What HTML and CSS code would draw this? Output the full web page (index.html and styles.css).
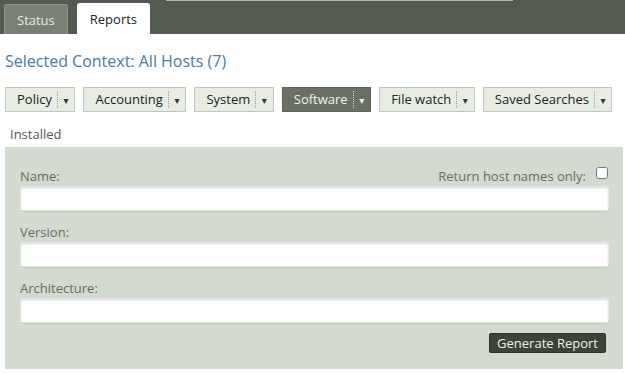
FILE: index.html
```html
<!DOCTYPE html>
<html lang="en">
<head>
    <meta charset="UTF-8">
    <meta name="viewport" content="width=device-width, initial-scale=1.0">
    <title>Reports</title>
    <link rel="stylesheet" href="styles.css">
</head>
<body>

<div class="topbar">
    <div class="topline"></div>
    <div class="tabs">
        <a class="tab">Status</a>
        <a class="tab active">Reports</a>
    </div>
</div>

<div class="content">
    <h2 class="context">Selected Context: All Hosts (7)</h2>

    <div class="menus">
        <div class="menu"><span class="menu-label">Policy</span><span class="menu-arrow">&#9662;</span></div>
        <div class="menu"><span class="menu-label">Accounting</span><span class="menu-arrow">&#9662;</span></div>
        <div class="menu"><span class="menu-label">System</span><span class="menu-arrow">&#9662;</span></div>
        <div class="menu selected"><span class="menu-label">Software</span><span class="menu-arrow">&#9662;</span></div>
        <div class="menu"><span class="menu-label">File watch</span><span class="menu-arrow">&#9662;</span></div>
        <div class="menu"><span class="menu-label">Saved Searches</span><span class="menu-arrow">&#9662;</span></div>
    </div>

    <div class="subtitle">Installed</div>

    <form class="panel">
        <div class="field-head">
            <label for="name">Name:</label>
            <label class="hostonly">Return host names only: <input type="checkbox" class="check"></label>
        </div>
        <input type="text" id="name" class="textbox">

        <div class="field-head">
            <label for="version">Version:</label>
        </div>
        <input type="text" id="version" class="textbox">

        <div class="field-head">
            <label for="arch">Architecture:</label>
        </div>
        <input type="text" id="arch" class="textbox">

        <div class="actions">
            <button type="button" class="generate">Generate Report</button>
        </div>
    </form>
</div>

</body>
</html>
```

FILE: styles.css
```css
body {
    margin: 0;
    padding: 0;
    font-family: "Open Sans", "DejaVu Sans", sans-serif;
    background: #fff;
    overflow: hidden;
}
.topbar {
    background-color: #535a4f;
    height: 34px;
    position: relative;
}
.topline {
    position: absolute;
    top: 0;
    left: 166px;
    width: 347px;
    height: 1px;
    background-color: #b9aeb4;
}
.tabs {
    display: flex;
    align-items: flex-end;
    height: 34px;
    padding-left: 4px;
    gap: 9px;
}
.tab {
    display: block;
    box-sizing: border-box;
    height: 30px;
    line-height: 30px;
    padding: 0 12px;
    font-size: 13px;
    color: #e6e9e2;
    background-color: #7a8174;
    border: 1px solid #8d9487;
    border-bottom: none;
    border-radius: 3px 3px 0 0;
}
.tab.active {
    height: 31px;
    background-color: #fff;
    color: #222;
    border-color: #fff;
}
.content {
    padding: 0 0 0 5px;
}
.context {
    margin: 16px 0 0 0;
    font-size: 16px;
    font-weight: normal;
    line-height: 22px;
    color: #4b7aa3;
}
.menus {
    display: flex;
    gap: 8px;
    margin-top: 15px;
}
.menu {
    display: flex;
    align-items: center;
    box-sizing: border-box;
    height: 25px;
    padding: 0 6px 0 11px;
    font-size: 13px;
    color: #222;
    background-color: #e7ede3;
    border: 1px solid #c2c5c0;
}
.menu-label {
    padding-right: 5px;
    border-right: 1px dotted #999;
    line-height: 17px;
}
.menu-arrow {
    padding-left: 5.5px;
    font-size: 10px;
    color: #333;
}
.menu.selected {
    background-color: #6a7064;
    border-color: #5c6257;
    color: #f2f2f2;
}
.menu.selected .menu-label {
    border-right-color: #ddd;
}
.menu.selected .menu-arrow {
    color: #eee;
}
.subtitle {
    margin: 13px 0 0 5px;
    font-size: 13px;
    line-height: 18px;
    color: #555;
}
.panel {
    margin-top: 4px;
    margin-right: 2px;
    background-color: #d3dbd0;
    padding: 14px 14px 16px 15px;
}
.field-head {
    display: flex;
    justify-content: space-between;
    align-items: flex-end;
    height: 24px;
    font-size: 13px;
    color: #6e6b5b;
}
.field-head label {
    line-height: 18px;
}
.hostonly {
    display: flex;
    align-items: center;
}
.check {
    margin: 0 1px 6px 10px;
    width: 12px;
    height: 12px;
}
.textbox {
    display: block;
    box-sizing: border-box;
    width: 100%;
    height: 25px;
    margin: 1px 0 6px 0;
    border: 1px solid #e4e8e2;
    border-radius: 2px;
    background: #fff;
    box-shadow: inset 0 1px 2px rgba(0,0,0,0.15), 0 1px 0 #c3cbc0;
}
.actions {
    display: flex;
    justify-content: flex-end;
    margin-top: 10px;
    padding-right: 3px;
}
.generate {
    height: 20px;
    padding: 0 7px;
    font-family: "Open Sans", "DejaVu Sans", sans-serif;
    font-size: 13px;
    line-height: 18px;
    color: #eee;
    background-color: #3c4438;
    border: 1px solid #2c3229;
    border-radius: 2px;
}
```
